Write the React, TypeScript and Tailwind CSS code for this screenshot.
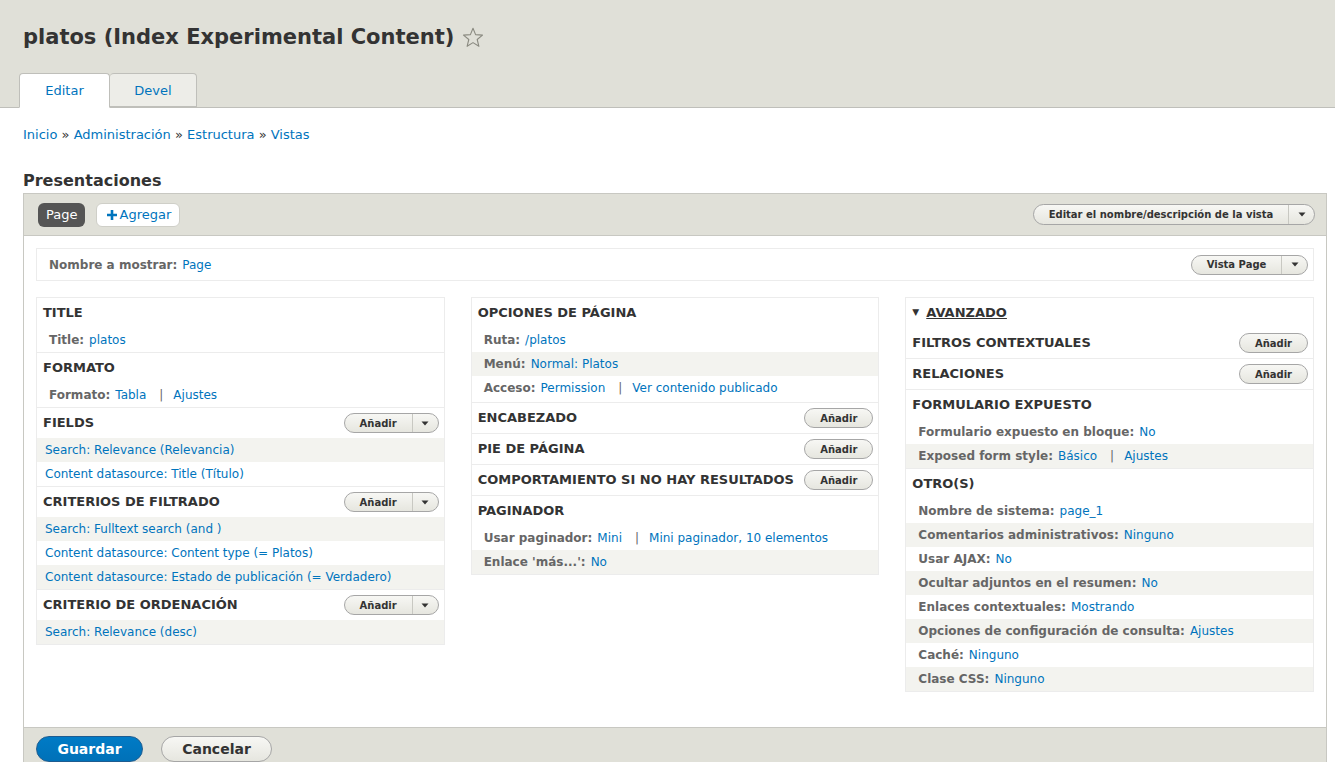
import React from "react";

type RowData = {
	label?: string;
	links: string[];
	shaded?: boolean;
};

type SectionData = {
	title: string;
	button?: "single" | "multi";
	rows?: RowData[];
	last?: boolean;
	extra?: boolean;
};

const link = "text-[#0074bd]";

const Arrow = () => (
	<svg width="8" height="5" viewBox="0 0 8 5" className="block">
		<path d="M0.5 0.5 L7.5 0.5 L4 4.5 Z" fill="#333" />
	</svg>
);

const DropButton = ({ label, multi = false, className = "" }: { label: string; multi?: boolean; className?: string }) => (
	<div
		className={`flex h-[20px] shrink-0 items-stretch whitespace-nowrap rounded-full border border-[#a6a6a6] bg-gradient-to-b from-[#f7f7f4] to-[#e6e6df] text-[10px] font-bold text-[#333] ${className}`}
	>
		<span className="flex flex-1 items-center justify-center">{label}</span>
		{multi && (
			<span className="flex w-[26px] items-center justify-center border-l border-[#c8c8c2]">
				<Arrow />
			</span>
		)}
	</div>
);

const Row = ({ row }: { row: RowData }) => (
	<div
		className={`flex h-[24px] items-center text-[12px] ${row.label ? "pl-[12px]" : "pl-[8px]"} ${row.shaded ? "bg-[#f3f3ef]" : "bg-white"}`}
	>
		{row.label && <span className="mr-[5px] font-bold text-[#666]">{row.label}:</span>}
		{row.links.map((l, i) => (
			<React.Fragment key={l}>
				{i > 0 && <span className="ml-[13px] mr-[10px] text-[#666]">|</span>}
				<span className={link}>{l}</span>
			</React.Fragment>
		))}
	</div>
);

const Section = ({ s }: { s: SectionData }) => (
	<div className={`${s.last ? "" : "border-b border-[#ececec]"} ${s.extra ? "pb-[2px]" : ""}`}>
		<div className="flex h-[30px] items-center justify-between pl-[6px] pr-[5px]">
			<h3 className="whitespace-nowrap text-[13px] font-bold uppercase text-[#333]">{s.title}</h3>
			{s.button === "multi" && <DropButton label="Añadir" multi className="w-[95px]" />}
			{s.button === "single" && <DropButton label="Añadir" className="w-[69px]" />}
		</div>
		{s.rows?.map((r, i) => <Row key={i} row={r} />)}
	</div>
);

const col1: SectionData[] = [
	{ title: "Title", rows: [{ label: "Title", links: ["platos"] }] },
	{ title: "Formato", rows: [{ label: "Formato", links: ["Tabla", "Ajustes"] }] },
	{
		title: "Fields",
		button: "multi",
		rows: [
			{ links: ["Search: Relevance (Relevancia)"], shaded: true },
			{ links: ["Content datasource: Title (Título)"] },
		],
	},
	{
		title: "Criterios de filtrado",
		button: "multi",
		rows: [
			{ links: ["Search: Fulltext search (and )"], shaded: true },
			{ links: ["Content datasource: Content type (= Platos)"] },
			{ links: ["Content datasource: Estado de publicación (= Verdadero)"], shaded: true },
		],
	},
	{
		title: "Criterio de ordenación",
		button: "multi",
		rows: [{ links: ["Search: Relevance (desc)"], shaded: true }],
		last: true,
	},
];

const col2: SectionData[] = [
	{
		title: "Opciones de página",
		rows: [
			{ label: "Ruta", links: ["/platos"] },
			{ label: "Menú", links: ["Normal: Platos"], shaded: true },
			{ label: "Acceso", links: ["Permission", "Ver contenido publicado"] },
		],
		extra: true,
	},
	{ title: "Encabezado", button: "single" },
	{ title: "Pie de página", button: "single" },
	{ title: "Comportamiento si no hay resultados", button: "single" },
	{
		title: "Paginador",
		rows: [
			{ label: "Usar paginador", links: ["Mini", "Mini paginador, 10 elementos"] },
			{ label: "Enlace 'más...'", links: ["No"], shaded: true },
		],
		last: true,
	},
];

const col3: SectionData[] = [
	{ title: "Filtros contextuales", button: "single" },
	{ title: "Relaciones", button: "single" },
	{
		title: "Formulario expuesto",
		rows: [
			{ label: "Formulario expuesto en bloque", links: ["No"] },
			{ label: "Exposed form style", links: ["Básico", "Ajustes"], shaded: true },
		],
	},
	{
		title: "Otro(s)",
		rows: [
			{ label: "Nombre de sistema", links: ["page_1"] },
			{ label: "Comentarios administrativos", links: ["Ninguno"], shaded: true },
			{ label: "Usar AJAX", links: ["No"] },
			{ label: "Ocultar adjuntos en el resumen", links: ["No"], shaded: true },
			{ label: "Enlaces contextuales", links: ["Mostrando"] },
			{ label: "Opciones de configuración de consulta", links: ["Ajustes"], shaded: true },
			{ label: "Caché", links: ["Ninguno"] },
			{ label: "Clase CSS", links: ["Ninguno"], shaded: true },
		],
		last: true,
	},
];

const Column = ({ children }: { children: React.ReactNode }) => (
	<div className="self-start border border-[#ececec] bg-white">{children}</div>
);

export default function App() {
	return (
		<div className="min-h-screen bg-white font-['DejaVu_Sans',sans-serif] text-[#333]">
			<header className="border-b border-[#bfbfba] bg-[#e0e0d8] pl-[23px] pt-[20px]">
				<h1 className="flex items-center text-[21px] font-bold leading-[34px] text-[#333]">
					platos (Index Experimental Content)
					<svg width="22" height="21" viewBox="0 0 22 21" className="ml-[8px]">
						<path
							d="M11 1.2 L13.6 7.6 L20.5 8.1 L15.2 12.5 L16.9 19.3 L11 15.6 L5.1 19.3 L6.8 12.5 L1.5 8.1 L8.4 7.6 Z"
							fill="none"
							stroke="#8a8a80"
							strokeWidth="1.1"
							strokeLinejoin="round"
						/>
					</svg>
				</h1>
				<nav className="-mb-px ml-[-4px] mt-[19px] flex text-[13px]">
					<span className="flex h-[35px] w-[91px] items-center justify-center rounded-t-[4px] border border-b-white border-[#bfbfba] bg-white pt-[1px] text-[#0074bd]">
						Editar
					</span>
					<span className="flex h-[34px] w-[87px] items-center justify-center rounded-t-[4px] border border-l-0 border-[#bfbfba] bg-[#ededE8] pt-[1px] text-[#0074bd]">
						Devel
					</span>
				</nav>
			</header>

			<main className="pl-[23px] pr-[8px]">
				<div className="mt-[17px] h-[20px] whitespace-pre text-[13px] leading-[20px]">
					<span className={link}>Inicio</span> » <span className={link}>Administración</span> »{" "}
					<span className={link}>Estructura</span> » <span className={link}>Vistas</span>
				</div>

				<h2 className="mt-[26px] text-[16px] font-bold leading-[20px] text-[#333]">Presentaciones</h2>

				<div className="mt-[2px] border border-[#c8c8c2]">
					<div className="flex h-[42px] items-center justify-between border-b border-[#c8c8c2] bg-[#e0e0d8] pl-[14px] pr-[11px]">
						<div className="flex items-center gap-[11px]">
							<span className="flex h-[24px] items-center rounded-[6px] bg-[#555] px-[8px] text-[13px] text-white">
								Page
							</span>
							<span className="flex h-[24px] items-center gap-[2px] rounded-[6px] border border-[#cfcfc8] bg-white pl-[10px] pr-[8px] text-[13px] text-[#0074bd]">
								<svg width="10" height="10" viewBox="0 0 10 10">
									<path d="M3.7 0 H6.3 V3.7 H10 V6.3 H6.3 V10 H3.7 V6.3 H0 V3.7 H3.7 Z" fill="#0074bd" />
								</svg>
								Agregar
							</span>
						</div>
						<DropButton label="Editar el nombre/descripción de la vista" multi className="h-[21px] w-[282px]" />
					</div>

					<div className="px-[12px] pb-[35px] pt-[12px]">
						<div className="flex h-[33px] items-center justify-between border border-[#ececec] pl-[12px] pr-[5px] text-[12px]">
							<div>
								<span className="mr-[5px] font-bold text-[#666]">Nombre a mostrar:</span>
								<span className={link}>Page</span>
							</div>
							<DropButton label="Vista Page" multi className="w-[117px]" />
						</div>

						<div className="mt-[16px] grid grid-cols-3 gap-[26px]">
							<Column>
								{col1.map((s) => (
									<Section key={s.title} s={s} />
								))}
							</Column>
							<Column>
								{col2.map((s) => (
									<Section key={s.title} s={s} />
								))}
							</Column>
							<Column>
								<div className="flex h-[30px] items-center gap-[7px] pl-[6px] text-[13px] font-bold text-[#333]">
									<span className="text-[9px]">▼</span>
									<span className="underline">AVANZADO</span>
								</div>
								{col3.map((s) => (
									<Section key={s.title} s={s} />
								))}
							</Column>
						</div>
					</div>

					<div className="flex h-[40px] items-start gap-[18px] border-t border-[#c8c8c2] bg-[#e0e0d8] pl-[12px] pt-[8px]">
						<span className="flex h-[26px] w-[107px] items-center justify-center rounded-full border border-[#1e5c90] bg-gradient-to-b from-[#007bc6] to-[#0071b8] text-[14px] font-bold text-white">
							Guardar
						</span>
						<span className="flex h-[26px] w-[111px] items-center justify-center rounded-full border border-[#a6a6a6] bg-gradient-to-b from-[#f7f7f4] to-[#e6e6df] text-[14px] font-bold text-[#333]">
							Cancelar
						</span>
					</div>
				</div>
			</main>
		</div>
	);
}
